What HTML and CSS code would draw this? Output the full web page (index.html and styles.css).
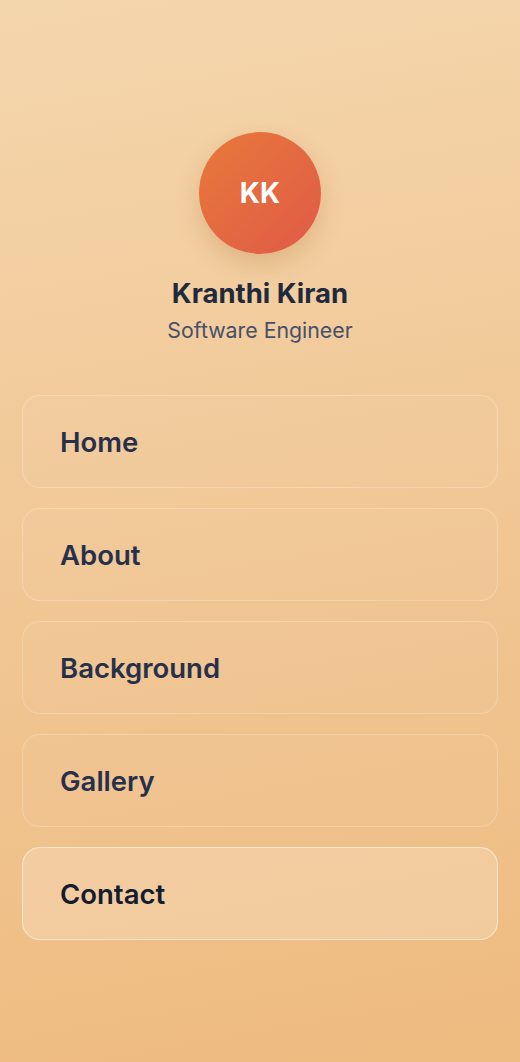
FILE: index.html
```html
<!DOCTYPE html>
<html lang="en">
<head>
<meta charset="utf-8">
<title>Kranthi Kiran</title>
<link rel="stylesheet" href="styles.css">
</head>
<body>
<div class="page">
  <header class="profile">
    <div class="avatar">KK</div>
    <h1 class="name">Kranthi Kiran</h1>
    <p class="role">Software Engineer</p>
  </header>
  <nav class="nav">
    <a class="nav-item" href="#">Home</a>
    <a class="nav-item" href="#">About</a>
    <a class="nav-item" href="#">Background</a>
    <a class="nav-item" href="#">Gallery</a>
    <a class="nav-item active" href="#">Contact</a>
  </nav>
</div>
</body>
</html>
```
FILE: styles.css
```css
html, body {
  margin: 0;
  padding: 0;
  height: 100%;
}
body {
  font-family: Inter, "Noto Sans", sans-serif;
  background: linear-gradient(170deg, #f4d6ad 0%, #f1c795 50%, #eebb80 100%);
  min-height: 1062px;
}
.page {
  padding: 132px 22px 0;
  display: flex;
  flex-direction: column;
}
.profile {
  display: flex;
  flex-direction: column;
  align-items: center;
}
.avatar {
  width: 122px;
  height: 122px;
  border-radius: 50%;
  background: linear-gradient(135deg, #e8793a 0%, #e05a48 100%);
  color: #fff;
  font-weight: 700;
  font-size: 28px;
  display: flex;
  align-items: center;
  justify-content: center;
  box-shadow: 0 10px 24px rgba(160, 90, 30, 0.22);
}
.name {
  margin: 23px 0 0;
  font-size: 27.5px;
  line-height: 32px;
  font-weight: 700;
  color: #1f2a3d;
}
.role {
  margin: 8px 0 0;
  font-size: 21.3px;
  line-height: 26px;
  font-weight: 400;
  color: #46506a;
}
.nav {
  margin-top: 52px;
  display: flex;
  flex-direction: column;
  gap: 20px;
}
.nav-item {
  display: flex;
  align-items: center;
  height: 93px;
  box-sizing: border-box;
  padding-left: 37px;
  border-radius: 18px;
  border: 1.5px solid rgba(255, 255, 255, 0.22);
  background: rgba(255, 255, 255, 0.03);
  color: #27304a;
  font-size: 27.5px;
  font-weight: 600;
  text-decoration: none;
}
.nav-item.active {
  background: rgba(255, 255, 255, 0.2);
  border-color: rgba(255, 255, 255, 0.5);
  color: #141c30;
}
```
